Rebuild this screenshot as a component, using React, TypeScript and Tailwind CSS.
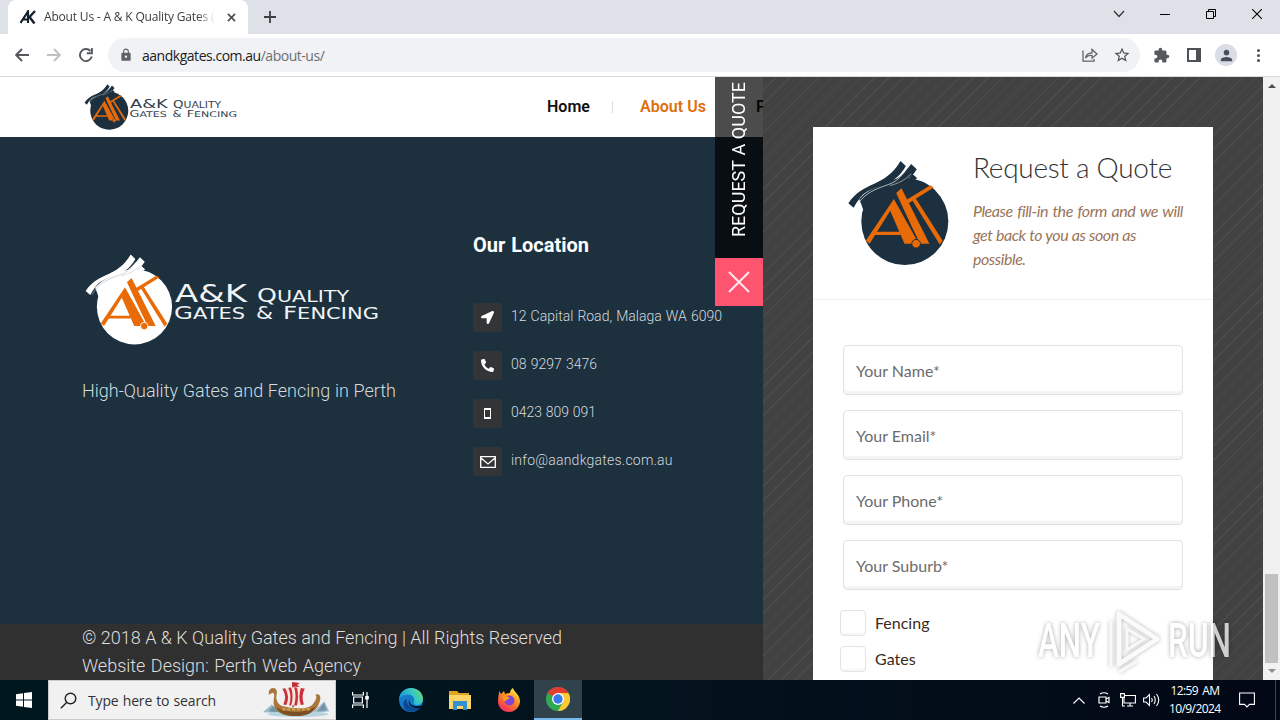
import type { ReactNode } from "react";
import { FaLocationArrow, FaPhone } from "react-icons/fa";
import { MdExtension, MdLock, MdPerson, MdStarOutline } from "react-icons/md";

const contacts = [
  { icon: "arrow", text: "12 Capital Road, Malaga WA 6090", width: "w-[211px]" },
  { icon: "phone", text: "08 9297 3476", width: "w-[86px]" },
  { icon: "mobile", text: "0423 809 091", width: "w-[85px]" },
  { icon: "mail", text: "info@aandkgates.com.au", width: "w-[162px] tracking-[0.016em]" },
];

const fields = ["Your Name*", "Your Email*", "Your Phone*", "Your Suburb*"];

function Emblem({ body, seam, className }: { body: string; seam: string; className: string }) {
  return (
    <svg viewBox="112 120 304 317" className={className}>
      <g fill={body}>
        <circle cx="283" cy="304" r="131" />
        <path d="M146 238 C180 195 250 180 320 180 L240 270 L165 290 L152 252 Z" />
        <path d="M113 249 C160 180 222 204 270 122 L286 137 C252 200 200 190 158 222 C148 232 138 246 129 263 Z" />
        <path d="M195 206 C252 188 274 168 302 131 L319 147 C298 184 262 190 215 206 Z" />
        <path d="M262 190 C285 184 299 174 306 161 L320 173 L300 192 Z" />
      </g>
      <path d="M135 262 C165 208 215 202 245 188 C262 180 274 166 288 147" fill="none" stroke={seam} strokeWidth="2" />
      <path d="M238 196 C262 190 284 180 302 160" fill="none" stroke={seam} strokeWidth="1.5" />
      <g fill="#e86b08">
        <path d="M250 236 L319 360 L303 371 L282 371 L239 272 L177 371 L166 361 Z" />
        <path d="M186 335 H270 V345 H180 Z" />
        <path d="M257 218 L273 204 L357 371 L329 371 L322 358 Z" />
        <path d="M286 240 L360 195 L370 202 L292 251 Z" />
        <path d="M304 238 L314 232 L397 362 L388 373 Z" />
      </g>
      <path d="M253 229 L319 353" stroke={body} strokeWidth="3" />
      <circle cx="317" cy="371" r="13" fill="#e86b08" stroke={body} strokeWidth="3" />
    </svg>
  );
}

function LogoText({ color, className }: { color: string; className: string }) {
  return (
    <svg viewBox="0 0 204 38" className={`overflow-visible ${className}`} fill={color} fontFamily="'DejaVu Sans', sans-serif">
      <text x="0" y="18.5" fontSize="24" textLength="72" lengthAdjust="spacingAndGlyphs">A&amp;K</text>
      <text x="82" y="18.5" fontSize="19" textLength="92" lengthAdjust="spacingAndGlyphs">
        Q<tspan fontSize="15.5">UALITY</tspan>
      </text>
      <text x="-1" y="35.5" fontSize="17.5" textLength="71" lengthAdjust="spacingAndGlyphs">
        G<tspan fontSize="15">ATES</tspan>
      </text>
      <text x="81" y="35.5" fontSize="17.5" textLength="17" lengthAdjust="spacingAndGlyphs">&amp;</text>
      <text x="108" y="35.5" fontSize="17.5" textLength="96" lengthAdjust="spacingAndGlyphs">
        F<tspan fontSize="15">ENCING</tspan>
      </text>
    </svg>
  );
}

// single line of text stretched to a known width
function Fit({ children, width, className }: { children: ReactNode; width: string; className?: string }) {
  return (
    <span className={`block whitespace-nowrap [text-align-last:justify] ${width} ${className ?? ""}`}>{children}</span>
  );
}

function TabBar() {
  return (
    <div className="flex h-[34px] shrink-0 bg-[#dee1e8]">
      <div className="ml-2 flex w-60 items-center rounded-t-lg bg-white pl-3">
        <svg viewBox="0 0 16 14" className="h-[14px] w-4" fill="none" stroke="#14202c">
          <path d="M0.5 13 L8 1.5 V13 M3 9.5 H8" strokeWidth="2.2" />
          <path d="M15 1 L9.5 7 L14.5 13.5" strokeWidth="2.4" />
        </svg>
        <div className="ml-2 w-[171px] overflow-hidden text-[12px] tracking-[-0.015em] whitespace-nowrap text-[#3c4043] [mask-image:linear-gradient(to_right,black_90%,transparent)]">
          About Us - A &amp; K Quality Gates (
        </div>
        <svg viewBox="0 0 10 10" className="ml-[12px] size-[9px]" stroke="#45494d" strokeWidth="1.7">
          <path d="M1 1 L9 9 M9 1 L1 9" />
        </svg>
      </div>
      <svg viewBox="0 0 12 12" className="mt-[11px] ml-4 size-3" stroke="#3c4043" strokeWidth="1.8">
        <path d="M6 0 V12 M0 6 H12" />
      </svg>
      <div className="ml-auto flex h-7 items-center">
        <svg viewBox="0 0 12 8" className="mr-[35px] h-2 w-3" fill="none" stroke="#333" strokeWidth="1.2">
          <path d="M1 1 L6 6.5 L11 1" />
        </svg>
        <div className="mr-9 h-px w-[10px] bg-black" />
        <svg viewBox="0 0 10 10" className="mr-9 size-[10px]" fill="none" stroke="#000">
          <path d="M0.5 2.5 H7.5 V9.5 H0.5 Z M2.5 2.5 V0.5 H9.5 V7.5 H7.5" />
        </svg>
        <svg viewBox="0 0 10 10" className="mr-[18px] size-[10px]" stroke="#000" strokeWidth="1.1">
          <path d="M0 0 L10 10 M10 0 L0 10" />
        </svg>
      </div>
    </div>
  );
}

function Toolbar() {
  return (
    <div className="flex h-[43px] shrink-0 items-center border-b border-[#d8dadd] bg-white pl-[15px]">
      <svg viewBox="0 0 14 14" className="size-[14px]" fill="none" stroke="#55595d" strokeWidth="1.9">
        <path d="M14 7 H1.5 M7 1 L1.2 7 L7 13" />
      </svg>
      <svg viewBox="0 0 14 14" className="ml-[18px] size-[14px]" fill="none" stroke="#bfc1c4" strokeWidth="1.9">
        <path d="M0 7 H12.5 M7 1 L12.8 7 L7 13" />
      </svg>
      <svg viewBox="0 0 14 14" className="ml-[18px] size-[14px]" fill="none" stroke="#55595d" strokeWidth="1.9">
        <path d="M12.8 8.5 A6 6 0 1 1 11.4 3 M12.9 0 V5.2 H7.8" />
      </svg>
      <div className="ml-[15px] flex h-[34px] w-[1032px] items-center rounded-full bg-[#f0f2f5] pl-[11px]">
        <MdLock className="size-[14px] text-[#5f6368]" />
        <span className="ml-[9px] text-[14px] tracking-[-0.034em] whitespace-nowrap text-[#202124]">
          aandkgates.com.au<span className="text-[#6b6f73]">/about-us/</span>
        </span>
        <svg viewBox="0 0 16 14" className="ml-auto h-[14px] w-4" fill="none" stroke="#5f6368" strokeWidth="1.3">
          <path d="M1 2.5 V13.2 H12 V11 M3.5 10 C4 6.5 6.5 5 10 4.8 V1.5 L15 6 L10 10.2 V7.5 C7 7.3 5 8 3.5 10 Z" />
        </svg>
        <MdStarOutline className="mr-[9px] ml-[15px] size-[18px] text-[#4d5155]" />
      </div>
      <MdExtension className="ml-[13px] size-[17px] text-[#55595d]" />
      <svg viewBox="0 0 14 14" className="ml-[17px] size-[14px]">
        <path d="M0 0 H14 V14 H0 Z M2 2 V12 H9 V2 Z" fill="#4d5155" fillRule="evenodd" />
      </svg>
      <div className="ml-[14px] flex size-[22px] items-center justify-center rounded-full bg-[#dadce6]">
        <MdPerson className="size-[17px] text-[#4a4f5c]" />
      </div>
      <div className="ml-[20px] flex flex-col gap-[2px]">
        <div className="size-[3px] rounded-full bg-[#4d5155]" />
        <div className="size-[3px] rounded-full bg-[#4d5155]" />
        <div className="size-[3px] rounded-full bg-[#4d5155]" />
      </div>
    </div>
  );
}

function ContactIcon({ name }: { name: string }) {
  if (name === "arrow") return <FaLocationArrow className="size-[13px]" />;
  if (name === "phone") return <FaPhone className="size-[13px] -scale-x-100" />;
  if (name === "mobile") return <div className="h-[11px] w-[7px] border-x-1 border-y-2 border-white" />;
  return (
    <svg viewBox="0 0 16 12" className="h-3 w-4" fill="none" stroke="currentColor" strokeWidth="1.3">
      <path d="M0.7 0.7 H15.3 V11.3 H0.7 Z M1 2 L8 8 L15 2" />
    </svg>
  );
}

function Site() {
  return (
    <div className="relative flex w-[763px] shrink-0 flex-col font-['Roboto',sans-serif]">
      <header className="flex h-[60px] shrink-0 overflow-hidden bg-white">
        <Emblem body="#1c303f" seam="#fff" className="mt-[7px] ml-[84px] h-[46px] w-[45px] shrink-0" />
        <LogoText color="#34424e" className="mt-[21px] ml-px h-[20px] w-[107px] shrink-0" />
        <nav className="ml-[310px] flex h-[60px] shrink-0 items-center text-[16px] font-semibold">
          <Fit width="w-[43px]" className="text-[#111]">Home</Fit>
          <div className="ml-[22px] h-3 w-px bg-[#ddd]" />
          <Fit width="w-[66px]" className="ml-[27px] text-[#dd700b]">About&nbsp;Us</Fit>
          <span className="ml-[50px] text-[#111]">P</span>
        </nav>
      </header>
      <section className="flex h-[487px] shrink-0 bg-[#1c303e] text-[#d5dade]">
        <div className="w-[473px] shrink-0 pt-[117px] pl-[82px]">
          <div className="flex">
            <Emblem body="#fff" seam="#aab8c4" className="ml-[3px] h-[91px] w-[88px]" />
            <LogoText color="#f1f4f6" className="mt-[29px] ml-[2px] h-[38px] w-[204px]" />
          </div>
          <Fit width="w-[314px]" className="mt-[32px] text-[18px] leading-7 font-light">
            High-Quality Gates and Fencing in Perth
          </Fit>
        </div>
        <div className="w-[290px] shrink-0 pt-[94px]">
          <Fit width="w-[116px]" className="text-[20px] leading-7 font-bold text-white">Our Location</Fit>
          <ul className="mt-[44px] flex flex-col gap-[19px]">
            {contacts.map((c) => (
              <li key={c.text} className="flex h-[29px] items-center">
                <div className="flex size-[29px] shrink-0 items-center justify-center rounded-[3px] bg-[#333436] text-white">
                  <ContactIcon name={c.icon} />
                </div>
                <Fit width={c.width} className="-mt-[2px] ml-[9px] shrink-0 text-[14px] font-light">{c.text}</Fit>
              </li>
            ))}
          </ul>
        </div>
      </section>
      <footer className="h-[56px] shrink-0 bg-[#303030] pl-[82px] text-[18px] leading-7 font-light text-[#dedede]">
        <Fit width="w-[480px]">© 2018 A &amp; K Quality Gates and Fencing | All Rights Reserved</Fit>
        <Fit width="w-[279px]">Website Design: Perth Web Agency</Fit>
      </footer>
      <div className="absolute top-0 right-0 w-12">
        <div className="flex h-[181px] justify-center bg-black/70 pt-[5px]">
          <div className="h-[155px] rotate-180 text-[18px] leading-[48px] whitespace-nowrap text-white [writing-mode:vertical-rl] [text-align-last:justify]">
            REQUEST A QUOTE
          </div>
        </div>
        <div className="flex size-12 items-center justify-center bg-[#ff5470]">
          <svg viewBox="0 0 22 22" className="size-[22px]" stroke="#ffe9ec" strokeWidth="2">
            <path d="M1 1 L21 21 M21 1 L1 21" />
          </svg>
        </div>
      </div>
    </div>
  );
}

function QuotePanel() {
  return (
    <div className="w-[500px] shrink-0 bg-[#424242] bg-[repeating-linear-gradient(135deg,transparent_0px,transparent_9px,#4d4d4d_9px,#4d4d4d_10px)] px-[50px] pt-[50px] font-['Lato',sans-serif]">
      <div className="h-[553px] overflow-hidden bg-white">
        <div className="flex h-[173px] border-b border-[#f1f1f1] pl-[35px]">
          <Emblem body="#1c303f" seam="#fff" className="mt-[33px] h-[106px] w-[101px] shrink-0" />
          <div className="ml-6">
            <Fit width="w-[196px]" className="mt-[21px] text-[28px] leading-[38px] font-light tracking-[-0.01em] text-[#333]">
              Request a Quote
            </Fit>
            <div className="mt-[13px] text-[16px] leading-6 font-normal tracking-[-0.028em] text-[#9a7459] italic">
              <Fit width="w-[210px]">Please fill-in the form and we will</Fit>
              <Fit width="w-[163px]">get back to you as soon as</Fit>
              <Fit width="w-[54px]">possible.</Fit>
            </div>
          </div>
        </div>
        <div className="flex flex-col gap-[15px] px-[30px] pt-[45px]">
          {fields.map((f) => (
            <div
              key={f}
              className="flex h-[50px] items-center rounded-[4px] border border-[#e2e2e2] px-3 pt-px text-[16px] text-[#6c6c6c] shadow-[inset_0_-3px_1px_#f4f4f4]"
            >
              {f}
            </div>
          ))}
        </div>
        <div className="mt-5 flex flex-col gap-[10px] pl-[27px] text-[16px] text-[#3a2a22]">
          {["Fencing", "Gates"].map((o) => (
            <label key={o} className="flex h-[26px] items-center gap-[9px]">
              <span className="size-[26px] rounded-[4px] border border-[#e4e4e4] shadow-[inset_0_-2px_1px_#f6f6f6]" />
              {o}
            </label>
          ))}
        </div>
      </div>
    </div>
  );
}

function Scrollbar() {
  return (
    <div className="flex w-[17px] shrink-0 flex-col items-center bg-[#f1f1f1]">
      <svg viewBox="0 0 8 4" className="mt-[7px] h-1 w-2" fill="#4f4f4f"><path d="M0 4 L4 0 L8 4 Z" /></svg>
      <div className="mt-[486px] h-[89px] w-[13px] bg-[#c1c1c1]" />
      <svg viewBox="0 0 8 4" className="mt-[6px] h-1 w-2" fill="#8f8f8f"><path d="M0 0 L4 4 L8 0 Z" /></svg>
    </div>
  );
}

function Watermark() {
  return (
    <svg
      viewBox="0 0 200 66"
      className="absolute top-[607px] left-[1035px] h-[66px] w-[200px] opacity-75 drop-shadow-[0_0_2px_rgba(0,0,0,0.45)]"
      fill="#fff"
      fontFamily="'Roboto', sans-serif"
    >
      <text x="3" y="50" fontSize="48" fontWeight="500" textLength="62" lengthAdjust="spacingAndGlyphs">ANY</text>
      <text x="133" y="50" fontSize="48" fontWeight="500" textLength="63" lengthAdjust="spacingAndGlyphs">RUN</text>
      <g fill="none" stroke="#fff" strokeLinejoin="round">
        <path d="M84 7 V57 L122 32 Z" strokeWidth="5" opacity="0.9" />
        <path d="M76 14 V60 M84 65 L102 54 M92 22 L109 32 L92 43 Z" strokeWidth="3" opacity="0.8" />
      </g>
    </svg>
  );
}

function Ship() {
  return (
    <svg viewBox="0 0 70 40" className="h-[39px] w-[70px]">
      <path d="M0 32 L9 24 L16 29 L22 33 Z M50 33 L63 21 L68 31 Z" fill="#9db9c9" />
      <path d="M6 31 L10 26 L18 32 Z M56 31 L63 22 L65 30 Z" fill="#7393a8" />
      <ellipse cx="36" cy="34" rx="31" ry="3" fill="#b6d4df" />
      <path d="M31 2 V27" stroke="#654026" strokeWidth="1.5" />
      <path d="M30 1 L38 2 L35 4 L38 6 L30 6 Z" fill="#c52a35" />
      <path d="M20 8 Q32 5 43 8 Q39 15 42 24 Q33 26 21 24 Q25 16 20 8 Z" fill="#f6e6dd" />
      <path d="M20 8 L23 7.4 Q28 16 24 24.6 L21 24 Q25 16 20 8 Z M26 7 L29 6.7 Q32 16 29 25 L27 25 Q30 15 26 7 Z M32 6.5 L35 6.6 Q37 16 35 25 L32 25.2 Q35 15 32 6.5 Z M39 7.2 L43 8 Q39 15 42 24 L39 24.6 Q36 16 39 7.2 Z" fill="#c92f3d" />
      <path d="M6 12 C6 8 10 6 13 8 C16 11 13 15 14 19 C15 23 17 25 21 26 C32 29 47 29 51 24 C54 20 56 17 54 14 C59 12 60 17 58 22 C56 30 47 36 33 36 C19 36 12 31 11 23 C11 17 13 13 10 12 L6 14 Z" fill="#a9773b" />
      <path d="M14 27 C23 33 45 34 54 26 C51 34 44 36 33 36 C22 36 16 32 14 27 Z" fill="#7b4f25" />
      <path d="M20 29 H50" stroke="#d3a050" strokeWidth="2.5" strokeDasharray="3 2" />
    </svg>
  );
}

function Taskbar() {
  return (
    <div className="flex h-10 shrink-0 items-center bg-linear-to-r from-[#00171e] via-[#03131e] to-[#020715] font-['Open_Sans',sans-serif] text-white">
      <svg viewBox="0 0 16 16" className="ml-4 size-4" fill="#fff">
        <path d="M0 2.2 L7 1.2 V7.5 H0 Z M8 1 L16 0 V7.5 H8 Z M0 8.5 H7 V14.8 L0 13.8 Z M8 8.5 H16 V16 L8 15 Z" />
      </svg>
      <div className="ml-4 flex h-10 w-[288px] items-center border border-[#c9cacb] bg-[#f1f1f1] pl-[11px]">
        <svg viewBox="0 0 17 17" className="size-[17px]" fill="none" stroke="#222" strokeWidth="1.4">
          <circle cx="10.5" cy="6.5" r="5.3" />
          <path d="M6.8 10.3 L0.8 16.3" />
        </svg>
        <Fit width="w-[128px]" className="ml-[11px] text-[14px] tracking-[-0.01em] text-[#333]">Type here to search</Fit>
        <div className="ml-[46px]"><Ship /></div>
      </div>
      <svg viewBox="0 0 17 16" className="ml-4 h-4 w-[17px]" fill="none" stroke="#fff" strokeWidth="1.2">
        <path d="M0.6 0 V3 H11.4 V0 M0.6 16 V13 H11.4 V16 M1.6 5 H10.4 V11 H1.6 Z M15 0 V16" />
        <path d="M13.2 4 H16.8 V7.5 H13.2 Z" fill="#fff" stroke="none" />
      </svg>
      <svg viewBox="0 0 24 24" className="ml-[30px] size-6">
        <defs>
          <linearGradient id="edge" x1="0" x2="1" y1="0.6" y2="0.2">
            <stop offset="0" stopColor="#1595d8" />
            <stop offset="0.6" stopColor="#36c6c5" />
            <stop offset="1" stopColor="#6bdc69" />
          </linearGradient>
        </defs>
        <circle cx="12" cy="12" r="12" fill="#1679cb" />
        <path d="M0 11 C1 4 6 0 12 0 C19 0 24 5 24 11 C24 15 21 17 18 17 C15 17 14 15 15 13 C16 9 12 6 8 7 C4 7 1 9 0 11 Z" fill="url(#edge)" />
        <path d="M8 11 C7 17 12 21 22 18 C18 25 10 25 6 21 C3 17 4 12 8 11 Z" fill="#0c4a92" />
        <path d="M11 10 C8 14 13 20 22 17.5 L24 18 L22.5 20 C12 21 7 16 11 10 Z" fill="#04182a" />
      </svg>
      <svg viewBox="0 0 22 20" className="ml-[26px] h-5 w-[22px]">
        <path d="M0 1 H8 L10 3 H20 V8 H0 Z" fill="#e2a321" />
        <path d="M0 5 H22 V19 H0 Z" fill="#fbd568" />
        <path d="M4 11 H18 V20 H14 V16 H8 V20 H4 Z" fill="#368fd1" />
      </svg>
      <svg viewBox="0 0 24 24" className="ml-[26px] size-6">
        <defs>
          <linearGradient id="fox" x1="0.8" x2="0.2" y1="0" y2="1">
            <stop offset="0" stopColor="#fff04a" />
            <stop offset="0.45" stopColor="#ff8a1d" />
            <stop offset="1" stopColor="#f0206a" />
          </linearGradient>
        </defs>
        <path d="M2 3 L4 6 L7 3 L8 6 C10 5 12 5 13 5 C13 3 14 1 16 0 C17 4 23 7 23 13 C23 19 18 24 12 24 C5 24 1 19 1 13 C1 9 2 7 2 3 Z" fill="url(#fox)" />
        <circle cx="12.5" cy="12.5" r="5" fill="#8044d7" />
        <path d="M5 9 C8 7 10 8 13 10 C10 11 10 13 7 13 Z" fill="#ff9a1e" />
      </svg>
      <div className="ml-[13px] flex h-10 w-12 items-center justify-center border-b-2 border-[#76b9ed] bg-[#30424c]">
        <svg viewBox="0 0 24 24" className="size-6">
          <circle cx="12" cy="12" r="12" fill="#30a852" />
          <path d="M12 12 L1.6 6 A12 12 0 0 1 22.4 6 Z" fill="#e33b2e" />
          <path d="M12 6 H22.4 A12 12 0 0 1 12 24 L17.2 15 Z" fill="#fcc934" />
          <circle cx="12" cy="12" r="6" fill="#fff" />
          <circle cx="12" cy="12" r="4.7" fill="#3879ec" />
        </svg>
      </div>
      <div className="ml-auto flex h-10 items-center">
        <svg viewBox="0 0 12 7" className="h-[7px] w-3" fill="none" stroke="#fff" strokeWidth="1.2">
          <path d="M0.5 6.5 L6 1 L11.5 6.5" />
        </svg>
        <svg viewBox="0 0 12 16" className="ml-[13px] h-4 w-3" fill="none" stroke="#fff" strokeWidth="1.2">
          <path d="M1 5 H8 V11 H1 Z M8 7 L11 5.5 V10.5 L8 9 M2 2 Q6 -0.5 10 2 M2 14 Q6 16.5 10 14" />
        </svg>
        <svg viewBox="0 0 16 14" className="ml-[10px] h-[14px] w-4" fill="none" stroke="#fff" strokeWidth="1.1">
          <path d="M5 2.5 H15.4 V10 H4 V5 M7 13 H13 M10 10 V13 M0.6 0.6 H4.4 V4.4 H0.6 Z M2.5 4.4 V13 H5" />
        </svg>
        <svg viewBox="0 0 17 14" className="ml-[7px] h-[14px] w-[17px]" fill="none" stroke="#fff" strokeWidth="1.1">
          <path d="M0.6 5 H3 L6.5 1.5 V12.5 L3 9 H0.6 Z M8.5 5 Q10 7 8.5 9 M11 3 Q13.5 7 11 11 M13.5 1 Q18 7 13.5 13" />
        </svg>
        <div className="ml-[8px] flex w-[54px] flex-col items-center text-[12px] leading-[18px]">
          <Fit width="w-[49px]" className="tracking-[-0.05em]">12:59 AM</Fit>
          <Fit width="w-[52px]" className="tracking-[-0.05em]">10/9/2024</Fit>
        </div>
        <svg viewBox="0 0 16 16" className="ml-[17px] size-4" fill="none" stroke="#fff" strokeWidth="1.1">
          <path d="M0.6 1 H15.4 V12.4 H10.5 L8 15 L5.5 12.4 H0.6 Z" />
        </svg>
        <div className="mr-1 ml-[20px] h-10 w-px bg-[#3d4650]" />
      </div>
    </div>
  );
}

export default function App() {
  return (
    <div className="relative flex h-[720px] w-[1280px] flex-col overflow-hidden bg-white font-['Open_Sans',sans-serif]">
      <TabBar />
      <Toolbar />
      <main className="flex h-[603px] shrink-0 overflow-hidden">
        <Site />
        <QuotePanel />
        <Scrollbar />
      </main>
      <Taskbar />
      <Watermark />
    </div>
  );
}
